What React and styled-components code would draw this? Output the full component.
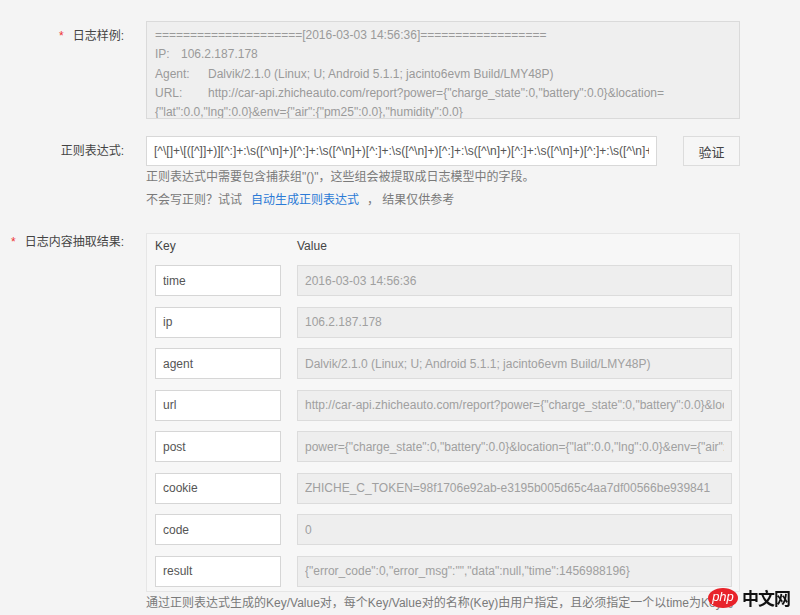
import React from 'react';
import styled, { createGlobalStyle } from 'styled-components';

const GlobalStyle = createGlobalStyle`
  html, body {
    margin: 0;
    padding: 0;
    background: #f4f4f4;
    font-family: "Liberation Sans", "Noto Sans CJK SC", sans-serif;
    font-size: 12px;
    color: #333;
  }
  * { box-sizing: border-box; }
`;

const REGEX =
  '[^\\[]+\\[([^]]+)][^:]+:\\s([^\\n]+)[^:]+:\\s([^\\n]+)[^:]+:\\s([^\\n]+)[^:]+:\\s([^\\n]+)[^:]+:\\s([^\\n]+)[^:]+:\\s([^\\n]+)';

const fields = [
  { key: 'time', value: '2016-03-03 14:56:36' },
  { key: 'ip', value: '106.2.187.178' },
  { key: 'agent', value: 'Dalvik/2.1.0 (Linux; U; Android 5.1.1; jacinto6evm Build/LMY48P)' },
  {
    key: 'url',
    value:
      'http://car-api.zhicheauto.com/report?power={"charge_state":0,"battery":0.0}&location={"lat":0.0,"lng":0.0}',
  },
  {
    key: 'post',
    value:
      'power={"charge_state":0,"battery":0.0}&location={"lat":0.0,"lng":0.0}&env={"air":{"pm25":0.0},"humidity":0.0}',
  },
  { key: 'cookie', value: 'ZHICHE_C_TOKEN=98f1706e92ab-e3195b005d65c4aa7df00566be939841' },
  { key: 'code', value: '0' },
  { key: 'result', value: '{"error_code":0,"error_msg":"","data":null,"time":1456988196}' },
];

const App = () => {
  return (
    <>
      <GlobalStyle />
      <Page>
        <FormRow>
          <Label>
            <Star>*</Star>日志样例:
          </Label>
          <SampleBox>
            <SampleLine>=====================[2016-03-03 14:56:36]==================</SampleLine>
            <SampleLine>
              <Tag width={26}>IP:</Tag>106.2.187.178
            </SampleLine>
            <SampleLine>
              <Tag width={53}>Agent:</Tag>Dalvik/2.1.0 (Linux; U; Android 5.1.1; jacinto6evm Build/LMY48P)
            </SampleLine>
            <SampleLine>
              <Tag width={53}>URL:</Tag>
              http://car-api.zhicheauto.com/report?power={'{'}"charge_state":0,"battery":0.0{'}'}&amp;location=
            </SampleLine>
            <SampleLine>{'{"lat":0.0,"lng":0.0}&env={"air":{"pm25":0.0},"humidity":0.0}'}</SampleLine>
          </SampleBox>
        </FormRow>

        <FormRow>
          <Label>正则表达式:</Label>
          <Field>
            <InputLine>
              <RegexInput readOnly value={REGEX} />
              <Button type="button">验证</Button>
            </InputLine>
            <Hint>正则表达式中需要包含捕获组"()"，这些组会被提取成日志模型中的字段。</Hint>
            <Hint>
              不会写正则？试试<Link href="#">自动生成正则表达式</Link>， 结果仅供参考
            </Hint>
          </Field>
        </FormRow>

        <FormRow>
          <Label top={-2}>
            <Star>*</Star>日志内容抽取结果:
          </Label>
          <Field>
            <Panel>
              <PanelHead>
                <HeadCell>Key</HeadCell>
                <HeadCell>Value</HeadCell>
              </PanelHead>
              <Rows>
                {fields.map((f) => (
                  <KvRow key={f.key}>
                    <KeyInput readOnly value={f.key} />
                    <ValueInput readOnly value={f.value} />
                  </KvRow>
                ))}
              </Rows>
            </Panel>
            <Hint>
              通过正则表达式生成的Key/Value对，每个Key/Value对的名称(Key)由用户指定，且必须指定一个以time为Key的对，用于指定日志时间字段。
            </Hint>
          </Field>
        </FormRow>
      </Page>
      <Watermark>
        <PhpBadge>php</PhpBadge>
        <WatermarkText>中文网</WatermarkText>
      </Watermark>
    </>
  );
};

const Page = styled.div`
  display: flex;
  flex-direction: column;
  gap: 17px;
  padding-top: 21px;
  height: 615px;
  overflow: hidden;
`;

const FormRow = styled.div`
  display: grid;
  grid-template-columns: 124px 594px;
  column-gap: 22px;
  align-items: start;
`;

const Label = styled.div`
  text-align: right;
  line-height: 30px;
  color: #444;
  font-size: 12px;
  white-space: nowrap;
  margin-top: ${(p) => p.top || 0}px;
`;

const Star = styled.span`
  color: #e33;
  margin-right: 9px;
`;

const SampleBox = styled.div`
  height: 98px;
  overflow: hidden;
  background: #efefef;
  border: 1px solid #dadada;
  padding: 4px 8px 0;
  color: #9a9a9a;
  font-size: 12px;
  line-height: 19.3px;
`;

const SampleLine = styled.div`
  white-space: nowrap;
`;

const Tag = styled.span`
  display: inline-block;
  width: ${(p) => p.width}px;
`;

const Field = styled.div`
  display: flex;
  flex-direction: column;
`;

const InputLine = styled.div`
  display: flex;
  gap: 26px;
`;

const RegexInput = styled.input`
  width: 511px;
  height: 30px;
  border: 1px solid #d8d8d8;
  background: #fff;
  padding: 0 7px;
  font-family: inherit;
  font-size: 12px;
  color: #555;
  outline: none;
`;

const Button = styled.button`
  width: 57px;
  height: 30px;
  border: 1px solid #dcdcdc;
  background: #f6f6f6;
  font-family: inherit;
  font-size: 13px;
  color: #444;
  padding: 0;
`;

const Hint = styled.div`
  line-height: 23px;
  color: #7a7a7a;
  font-size: 12px;
`;

const Link = styled.a`
  color: #2b7ad6;
  text-decoration: none;
  margin: 0 8px 0 9px;
`;

const Panel = styled.div`
  background: #f7f7f7;
  border: 1px solid #e6e6e6;
  padding: 0 7px 4px 8px;
  margin-top: 4px;
`;

const PanelHead = styled.div`
  display: grid;
  grid-template-columns: 126px 1fr;
  column-gap: 16px;
  height: 31px;
  line-height: 24px;
  color: #444;
  font-size: 12px;
`;

const HeadCell = styled.div``;

const Rows = styled.div`
  display: flex;
  flex-direction: column;
  gap: 10.5px;
`;

const KvRow = styled.div`
  display: grid;
  grid-template-columns: 126px 1fr;
  column-gap: 16px;
`;

const BaseInput = styled.input`
  height: 31px;
  padding: 0 7px;
  font-family: inherit;
  font-size: 12px;
  outline: none;
  min-width: 0;
`;

const KeyInput = styled(BaseInput)`
  border: 1px solid #d6d6d6;
  background: #fff;
  color: #555;
`;

const ValueInput = styled(BaseInput)`
  border: 1px solid #dcdcdc;
  background: #eeeeee;
  color: #a0a0a0;
`;

const Watermark = styled.div`
  position: fixed;
  left: 708px;
  top: 585px;
  display: flex;
  align-items: center;
  gap: 4px;
`;

const PhpBadge = styled.span`
  display: inline-flex;
  align-items: center;
  justify-content: center;
  width: 30px;
  height: 20px;
  border-radius: 50%;
  background: #e8232a;
  color: #fff;
  font-style: italic;
  font-size: 13px;
  line-height: 1;
  padding-bottom: 2px;
`;

const WatermarkText = styled.span`
  color: #111;
  font-size: 17px;
  font-weight: bold;
  letter-spacing: -1px;
`;

export default App;
